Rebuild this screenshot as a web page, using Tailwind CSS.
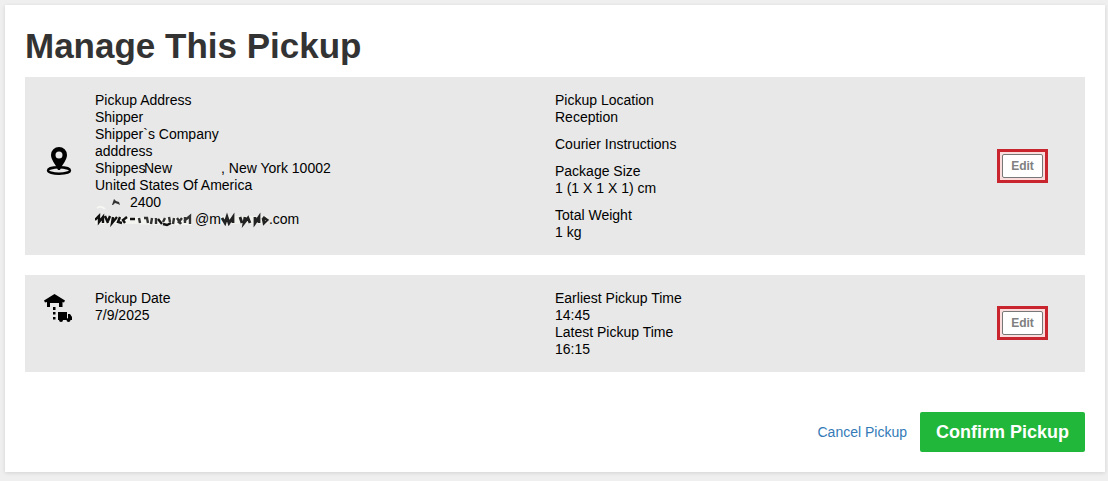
<!DOCTYPE html>
<html lang="en">
<head>
  <meta charset="UTF-8" />
  <meta name="viewport" content="width=device-width, initial-scale=1.0" />
  <title>Manage This Pickup</title>
  <script src="https://cdn.jsdelivr.net/npm/@tailwindcss/browser@4"></script>
</head>
<body class="min-h-screen bg-[#efefef] pt-[5px] pl-[5px] pr-[3px] pb-[9px] font-['Liberation_Sans',Arial,sans-serif] text-sm/[17px] text-black">
  <main class="bg-white px-5 pt-5 pb-5 shadow-[0_1px_4px_rgba(0,0,0,0.12)]">
    <h1 class="text-[35px]/[42px] font-bold text-[#333] mb-[10px]">Manage This Pickup</h1>

    <!-- Address and package -->
    <section class="flex bg-[#e8e8e8] pt-[15px] pb-[14px] mb-5">
      <div class="w-[70px] shrink-0 flex items-center pl-5 pb-3">
        <svg class="w-7 h-7" viewBox="0 0 28 28" aria-hidden="true">
          <ellipse cx="14" cy="23.500" rx="11" ry="3.200" fill="none" stroke="#000" stroke-width="2.400" />
          <path fill-rule="evenodd" d="M14 0a8 8 0 0 1 8 8c0 5-4.500 9-7 15h-2C10.500 17 6 13 6 8a8 8 0 0 1 8-8zm0 4.500a3.500 3.500 0 1 0 0 7 3.500 3.500 0 0 0 0-7z" />
        </svg>
      </div>
      <div class="w-[460px] shrink-0">
        <p>Pickup Address</p>
        <p>Shipper</p>
        <p>Shipper`s Company</p>
        <p>adddress</p>
        <p class="flex"><span class="w-[49px]">Shippes</span><span class="w-[77px]">New</span><span>, New York 10002</span></p>
        <p>United States Of America</p>
        <p class="flex">
          <svg class="w-[35px] h-[17px]" viewBox="0 0 35 17" aria-hidden="true">
            <path d="M17 11l1-3 1-3 2 2 3 1 1 3-2-1-3-1-2 2z" fill="#333" />
            <path d="M2 14q4-3 8 1" fill="none" stroke="#f6f6f2" stroke-width="2" />
          </svg>
          <span>2400</span>
        </p>
        <!-- masked e-mail address -->
        <p class="flex">
          <svg class="w-[100px] h-[17px]" viewBox="0 0 100 17" aria-hidden="true">
            <path d="M0 5h15l12 1h16l18 2 36-3v9H60l-20-1H0z" fill="#f3f3f0" />
            <path d="M0 9l4-4v6l4-5v6M10 5l3 7M15 5l-2 5M18 6l-1 6 5-6M25 6l-2 5 4 1M32 6l-4 3 2 3M35 8h5M68 13l4 1 4-2M63 8l4 5" fill="none" stroke="#111" stroke-width="2.400" />
            <path d="M44 7l1 5M49 7h3l1 5M57 7l-1 6M61 7v6M70 7l-2 4M74 6l1 5M79 7l-1 6M82 7l4 6M87 7l-4 5M90 6v6M89 10l6-5v8" fill="none" stroke="#333" stroke-width="2.400" />
          </svg>
          <span>@m</span>
          <svg class="w-12 h-[17px]" viewBox="0 0 48 17" aria-hidden="true">
            <path d="M0 5h47v8H0z" fill="#f0f0ed" />
            <path d="M1 7l3 5 2-6 2 6 4-6v6M19 6l2 6M24 6l-1 6 4-5 2 5M34 6v6l4-6v6M42 6l4 3-3 3-1-5" fill="none" stroke="#222" stroke-width="2.800" />
          </svg>
          <span>.com</span>
        </p>
      </div>
      <div class="flex-1 space-y-[10px]">
        <div>
          <p>Pickup Location</p>
          <p>Reception</p>
        </div>
        <p>Courier Instructions</p>
        <div>
          <p>Package Size</p>
          <p>1 (1 X 1 X 1) cm</p>
        </div>
        <div>
          <p>Total Weight</p>
          <p>1 kg</p>
        </div>
      </div>
      <div class="flex items-center pr-[37px] pb-0.5">
        <div class="border-3 border-[#c9252f] bg-[#fbdcdc] p-[2px]">
          <button type="button" class="block w-[41px] h-6 rounded-xs border border-[#777] bg-white text-xs font-bold text-[#808080]">Edit</button>
        </div>
      </div>
    </section>

    <!-- Date and time -->
    <section class="flex bg-[#e8e8e8] pt-[15px] pb-[14px] mb-10">
      <div class="w-[70px] shrink-0 pl-[19px] pt-1">
        <svg class="w-7 h-7" viewBox="0 0 28 28" aria-hidden="true">
          <path d="M10.500 0L21 6.500 20 8.500 18.500 8v5H15V9H6v4H3V8L1 8.500 0 6.500z" />
          <path d="M9 13h2.500v3H9zM9 18h2.500v2.500H9zM9 23h2.500v2.500H9z" />
          <path d="M14 18h9v8h-9zM24 20h2l2 3v3h-4z" />
          <circle cx="17" cy="26" r="2" />
          <circle cx="24.500" cy="26" r="2" />
        </svg>
      </div>
      <div class="w-[460px] shrink-0">
        <p>Pickup Date</p>
        <p>7/9/2025</p>
      </div>
      <div class="flex-1">
        <p>Earliest Pickup Time</p>
        <p>14:45</p>
        <p>Latest Pickup Time</p>
        <p>16:15</p>
      </div>
      <div class="flex items-center pr-[37px] pb-0.5">
        <div class="border-3 border-[#c9252f] bg-[#fbdcdc] p-[2px]">
          <button type="button" class="block w-[41px] h-6 rounded-xs border border-[#777] bg-white text-xs font-bold text-[#808080]">Edit</button>
        </div>
      </div>
    </section>

    <div class="flex items-center justify-end gap-[13px]">
      <a href="#" class="text-[#337ab7]">Cancel Pickup</a>
      <button type="button" class="h-10 px-4 rounded-xs bg-[#21b73a] text-lg font-bold text-white">Confirm Pickup</button>
    </div>
  </main>
</body>
</html>
